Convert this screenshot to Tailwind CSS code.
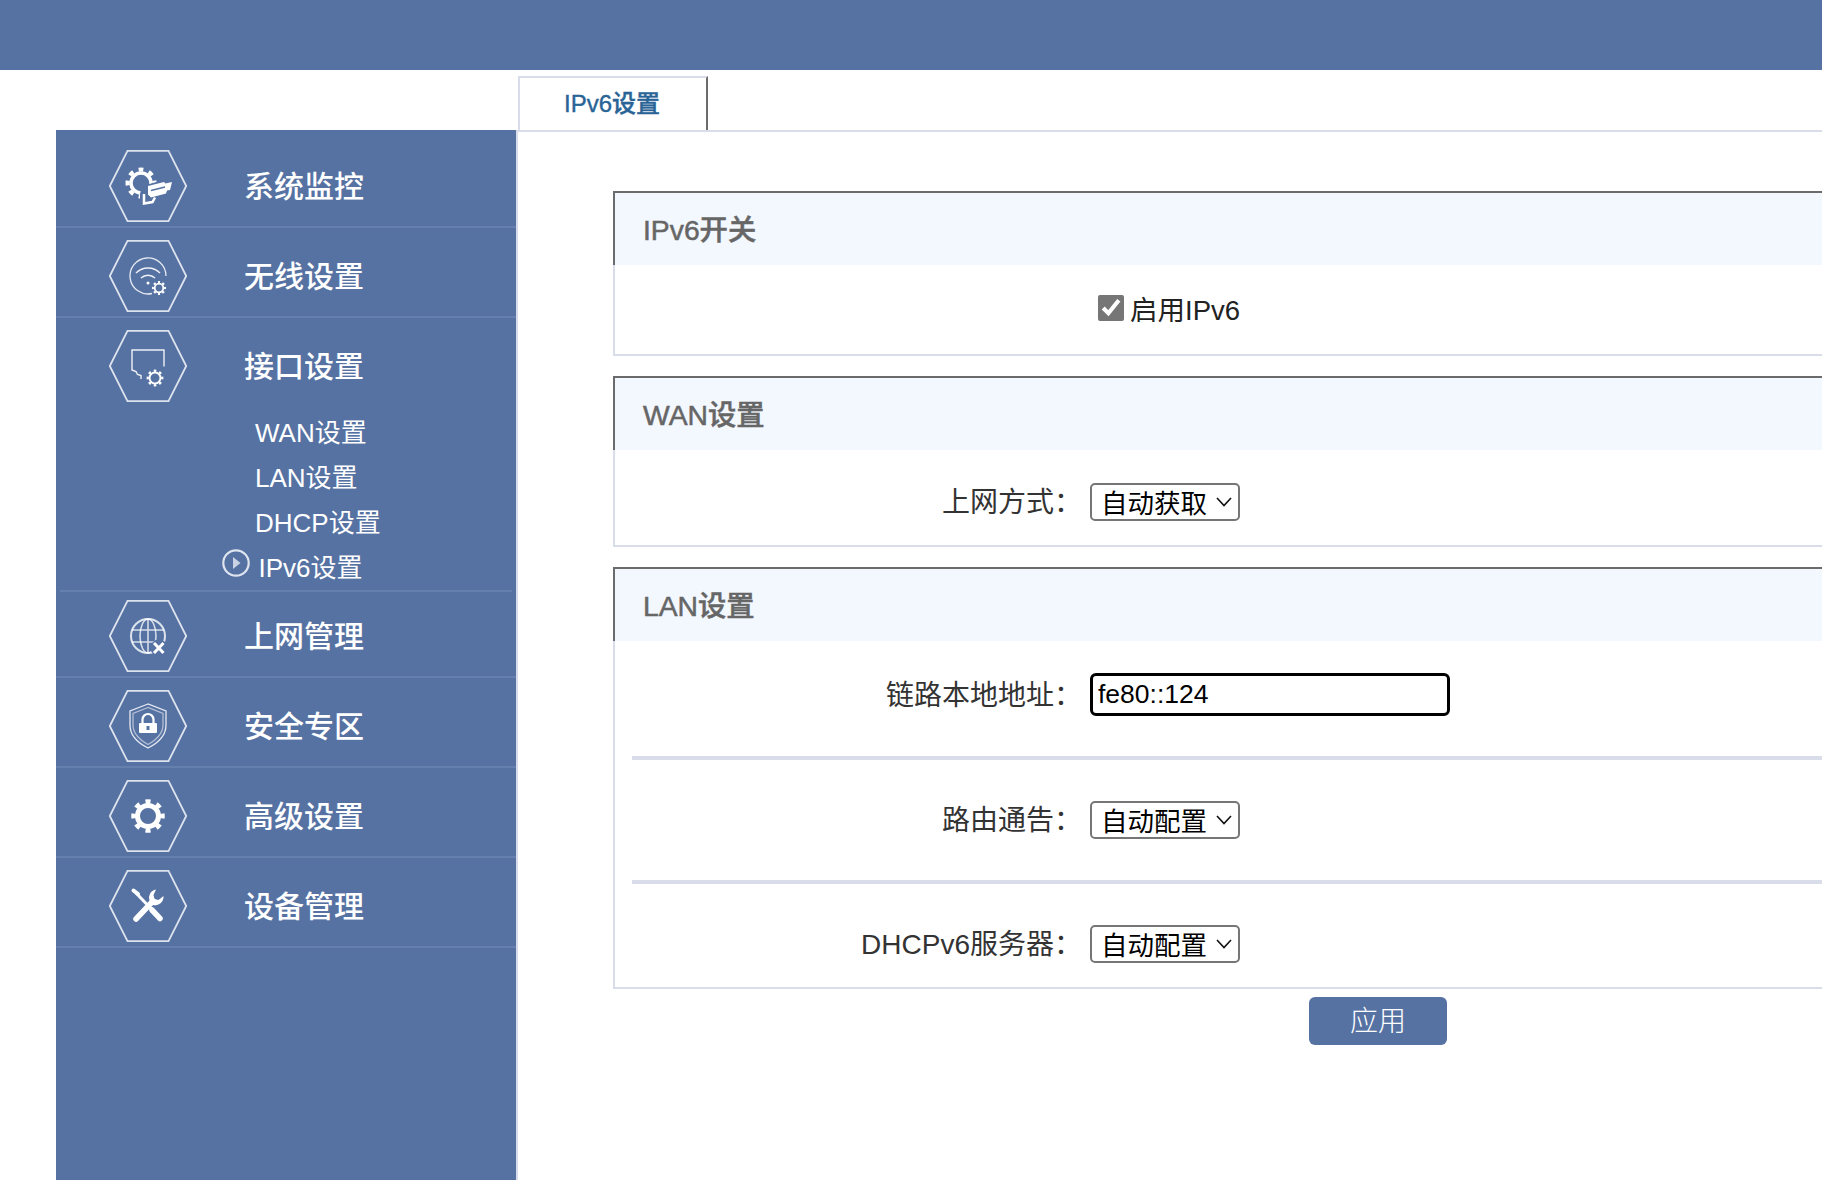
<!DOCTYPE html>
<html lang="zh-CN">
<head>
<meta charset="utf-8">
<title>IPv6设置</title>
<script src="https://cdn.jsdelivr.net/npm/@tailwindcss/browser@4"></script>
</head>
<body class="bg-white overflow-hidden font-['Liberation_Sans','Noto_Sans_CJK_SC',sans-serif]">
<div class="w-[1822px] h-[1180px] overflow-hidden flex flex-col">
  <header class="h-[70px] shrink-0 bg-[#5672a3]"></header>
  <div class="flex flex-1 min-h-0">
    <!-- sidebar -->
    <div class="ml-[56px] mt-[60px] w-[462px] shrink-0 bg-[#5672a3] border-r-2 border-[#d8dde9] text-white">
      <div class="pt-[20px] pb-[4px] border-b-2 border-[#6680ad] flex items-center h-[98px]">
        <svg class="ml-[53px] shrink-0" width="78" height="72" viewBox="0 0 78 72" fill="none" stroke="#fff">
          <path d="M.8 36 18.500 .8h41L77.200 36 59.500 71.200h-41Z" stroke-width="1.800" stroke-opacity=".8" stroke-linejoin="round"/>
          <circle cx="32" cy="33" r="10" stroke-width="3.500"/>
          <circle cx="32" cy="33" r="13.500" stroke-width="4" pathLength="8" stroke-dasharray=".45 .55" stroke-dashoffset=".225"/>
          <path d="M33 36 62 28l3 4-2 12-17 5-3 8-12 1V44Z" fill="#5672a3" stroke="none"/>
          <path d="M39 36 55 32l1.500 1.500L63 32l-2 8-3 .5-1 3-15 4-3-3Z" fill="#fff" stroke="none"/>
          <path d="M35 44v9.500l8.500-1.500 2.500-4.500" stroke-width="2.500"/>
          <path d="M42 40.500 56 37" stroke="#5672a3" stroke-width="1.400"/>
        </svg>
        <span class="ml-[57px] mt-[2px] text-[30px] leading-none font-medium">系统监控</span>
      </div>
      <div class="pt-[12px] pb-[4px] border-b-2 border-[#6680ad] flex items-center h-[90px]">
        <svg class="ml-[53px] shrink-0" width="78" height="72" viewBox="0 0 78 72" fill="none" stroke="#fff">
          <path d="M.8 36 18.500 .8h41L77.200 36 59.500 71.200h-41Z" stroke-width="1.800" stroke-opacity=".8" stroke-linejoin="round"/>
          <path d="M43 53.500A18 18 0 1 1 57 36" stroke-width="1.300" stroke-opacity=".85"/>
          <path d="M27 33a17 17 0 0 1 24 0M32 38a10 10 0 0 1 14 0" stroke-width="1.500" stroke-opacity=".9"/>
          <circle cx="39" cy="43" r="1.500" fill="#fff" stroke="none"/>
          <circle cx="50" cy="48" r="4.300" stroke-width="1.800"/>
          <circle cx="50" cy="48" r="6" stroke-width="2" pathLength="8" stroke-dasharray=".45 .55" stroke-dashoffset=".225"/>
        </svg>
        <span class="ml-[57px] mt-[2px] text-[30px] leading-none font-medium">无线设置</span>
      </div>
      <div class="pt-[12px]">
        <div class="flex items-center">
          <svg class="ml-[53px] shrink-0" width="78" height="72" viewBox="0 0 78 72" fill="none" stroke="#fff">
            <path d="M.8 36 18.500 .8h41L77.200 36 59.500 71.200h-41Z" stroke-width="1.800" stroke-opacity=".8" stroke-linejoin="round"/>
            <path d="M55 36.500V20H23v20l4 1.500 1.500 3 3.500 1v3.500" stroke-width="1.400" stroke-opacity=".9"/>
            <circle cx="46" cy="48" r="5.500" stroke-width="2"/>
            <circle cx="46" cy="48" r="7.300" stroke-width="2.200" pathLength="8" stroke-dasharray=".45 .55" stroke-dashoffset=".225"/>
          </svg>
          <span class="ml-[57px] mt-[2px] text-[30px] leading-none font-medium">接口设置</span>
        </div>
        <div class="mt-[8px] text-[26px] leading-[47px]">
          <div class="h-[45px] pl-[199px]">WAN设置</div>
          <div class="h-[45px] pl-[199px]">LAN设置</div>
          <div class="h-[45px] pl-[199px]">DHCP设置</div>
          <div class="h-[45px] flex">
            <svg class="ml-[166px] mt-[4px] shrink-0" width="28" height="28" viewBox="0 0 28 28" fill="none">
              <circle cx="14" cy="14" r="12.700" stroke="#dfe5ef" stroke-width="2.200"/>
              <path d="M11 8 18.500 14 11 20Z" fill="#c9d3e3"/>
            </svg>
            <span class="ml-[8.500px]">IPv6设置</span>
          </div>
        </div>
        <div class="mx-[4px] h-[2px] bg-[#6680ad]"></div>
      </div>
      <div class="pt-[8px] pb-[4px] border-b-2 border-[#6680ad] flex items-center h-[86px]">
        <svg class="ml-[53px] shrink-0" width="78" height="72" viewBox="0 0 78 72" fill="none" stroke="#fff">
          <path d="M.8 36 18.500 .8h41L77.200 36 59.500 71.200h-41Z" stroke-width="1.800" stroke-opacity=".8" stroke-linejoin="round"/>
          <circle cx="39" cy="36" r="17" stroke-width="2" stroke-opacity=".8"/>
          <ellipse cx="39" cy="36" rx="8" ry="17" stroke-width="1.600" stroke-opacity=".75"/>
          <path d="M39 19v34M23 30h32M23 42h32" stroke-width="1.600" stroke-opacity=".75"/>
          <circle cx="50" cy="48" r="8.500" fill="#5672a3" stroke="none"/>
          <path d="M45 43 54.500 53M54.500 43 45 53" stroke-width="3"/>
        </svg>
        <span class="ml-[57px] mt-[2px] text-[30px] leading-none font-medium">上网管理</span>
      </div>
      <div class="pt-[12px] pb-[4px] border-b-2 border-[#6680ad] flex items-center h-[90px]">
        <svg class="ml-[53px] shrink-0" width="78" height="72" viewBox="0 0 78 72" fill="none" stroke="#fff">
          <path d="M.8 36 18.500 .8h41L77.200 36 59.500 71.200h-41Z" stroke-width="1.800" stroke-opacity=".8" stroke-linejoin="round"/>
          <path d="M39 14 21 21v14c0 11 8 18 18 23 10-5 18-12 18-23V21Z" stroke-width="1.300" stroke-opacity=".85"/>
          <path d="M39 17.500 24 23.500V35c0 9 7 15 15 19.500 8-4.500 15-10.500 15-19.500V23.500Z" stroke-width="1.300" stroke-opacity=".55"/>
          <path d="M33.500 33v-3.500a5.500 5.500 0 0 1 11 0V33" stroke-width="2.200"/>
          <path fill-rule="evenodd" clip-rule="evenodd" d="M31 33h16a1 1 0 0 1 1 1v8a1 1 0 0 1-1 1H31a1 1 0 0 1-1-1v-8a1 1 0 0 1 1-1Zm6.500 3v4h3v-4Z" fill="#fff" stroke="none"/>
        </svg>
        <span class="ml-[57px] mt-[2px] text-[30px] leading-none font-medium">安全专区</span>
      </div>
      <div class="pt-[12px] pb-[4px] border-b-2 border-[#6680ad] flex items-center h-[90px]">
        <svg class="ml-[53px] shrink-0" width="78" height="72" viewBox="0 0 78 72" fill="none" stroke="#fff">
          <path d="M.8 36 18.500 .8h41L77.200 36 59.500 71.200h-41Z" stroke-width="1.800" stroke-opacity=".8" stroke-linejoin="round"/>
          <circle cx="39" cy="36" r="10.500" stroke-width="5"/>
          <circle cx="39" cy="36" r="14.500" stroke-width="4.500" pathLength="8" stroke-dasharray=".45 .55" stroke-dashoffset=".225"/>
        </svg>
        <span class="ml-[57px] mt-[2px] text-[30px] leading-none font-medium">高级设置</span>
      </div>
      <div class="pt-[12px] pb-[4px] border-b-2 border-[#6680ad] flex items-center h-[90px]">
        <svg class="ml-[53px] shrink-0" width="78" height="72" viewBox="0 0 78 72" fill="none" stroke="#fff">
          <path d="M.8 36 18.500 .8h41L77.200 36 59.500 71.200h-41Z" stroke-width="1.800" stroke-opacity=".8" stroke-linejoin="round"/>
          <path d="M27 23 50 47" stroke-width="3"/>
          <path d="M43 40 51 48.500" stroke-width="5.500" stroke-linecap="round"/>
          <path d="M24.500 20.500 29 24" stroke-width="4" stroke-linecap="round"/>
          <path d="M27 49 44 31" stroke-width="5.500" stroke-linecap="round"/>
          <path d="M47 19.500a8.500 8.500 0 0 0-6.500 11.500l3.500 4a8.500 8.500 0 0 0 10.500-9l-5 4-4-1-1-4Z" fill="#fff" stroke="none"/>
        </svg>
        <span class="ml-[57px] mt-[2px] text-[30px] leading-none font-medium">设备管理</span>
      </div>
    </div>

    <!-- content -->
    <div class="flex-1 min-w-0 overflow-hidden">
      <div class="mt-[6px] w-[190px] h-[54px] bg-white border-t-2 border-l-2 border-r-2 border-t-[#d8dde9] border-l-[#d8dde9] border-r-[#6b6b6b] flex items-center justify-center pr-[2px] text-[24px] font-medium text-[#2a6496] [-webkit-text-stroke:0.4px_#2a6496]">IPv6设置</div>
      <div class="h-[2px] bg-[#d8dde9]"></div>

      <div class="ml-[95px] mt-[59px] w-[1400px]">
        <!-- IPv6 switch -->
        <section class="h-[165px] border-l-2 border-b-2 border-[#d8dde9] flex flex-col">
          <h2 class="-ml-[2px] h-[74px] shrink-0 bg-[#f3f7fe] border-t-2 border-l-2 border-[#6b6b6b] pl-[28px] pt-[2px] flex items-center text-[28.3px] font-medium text-[#666] [-webkit-text-stroke:0.5px_#666]">IPv6开关</h2>
          <label class="pl-[483px] pt-[30px] flex items-start text-[27.5px] text-[#222]">
            <input type="checkbox" checked class="w-[26px] h-[26px] m-0 accent-[#767676]">
            <span class="ml-[6px] leading-[32px]">启用IPv6</span>
          </label>
        </section>

        <!-- WAN -->
        <section class="mt-[20px] h-[171px] border-l-2 border-b-2 border-[#d8dde9]">
          <h2 class="-ml-[2px] h-[74px] bg-[#f3f7fe] border-t-2 border-l-2 border-[#6b6b6b] pl-[28px] pt-[2px] flex items-center text-[28.3px] font-medium text-[#666] [-webkit-text-stroke:0.5px_#666]">WAN设置</h2>
          <div class="pt-[33px] flex items-start">
            <span class="w-[467px] text-right text-[28px] leading-[40px] text-[#333]">上网方式：</span>
            <div class="relative ml-[8px] w-[150px] h-[38px]">
              <select class="appearance-none w-full h-full border-2 border-[#767676] rounded-[5px] pl-[9px] pb-[2px] bg-white text-[26.5px] text-black outline-none"><option>自动获取</option></select>
              <svg class="absolute right-[8px] top-[14px] pointer-events-none" width="16" height="10" viewBox="0 0 16 10" fill="none" stroke="#111" stroke-width="1.600"><path d="M1 1 8 8.500 15 1"/></svg>
            </div>
          </div>
        </section>

        <!-- LAN -->
        <section class="mt-[20px] h-[422px] border-l-2 border-b-2 border-[#d8dde9]">
          <h2 class="-ml-[2px] h-[74px] bg-[#f3f7fe] border-t-2 border-l-2 border-[#6b6b6b] pl-[28px] pt-[2px] flex items-center text-[28.3px] font-medium text-[#666] [-webkit-text-stroke:0.5px_#666]">LAN设置</h2>
          <div class="h-[115px] pt-[32px] flex items-start">
            <span class="w-[467px] text-right text-[28px] leading-[45px] text-[#333]">链路本地地址：</span>
            <input value="fe80::124" class="ml-[8px] w-[360px] h-[43px] border-[3.5px] border-black rounded-[6px] pl-[5px] text-[26.5px] text-black bg-white outline-none">
          </div>
          <div class="ml-[17px] h-[4px] bg-[#d8dde9]"></div>
          <div class="h-[120px] pt-[41px] flex items-start">
            <span class="w-[467px] text-right text-[28px] leading-[40px] text-[#333]">路由通告：</span>
            <div class="relative ml-[8px] w-[150px] h-[38px]">
              <select class="appearance-none w-full h-full border-2 border-[#767676] rounded-[5px] pl-[9px] pb-[2px] bg-white text-[26.5px] text-black outline-none"><option>自动配置</option></select>
              <svg class="absolute right-[8px] top-[14px] pointer-events-none" width="16" height="10" viewBox="0 0 16 10" fill="none" stroke="#111" stroke-width="1.600"><path d="M1 1 8 8.500 15 1"/></svg>
            </div>
          </div>
          <div class="ml-[17px] h-[4px] bg-[#d8dde9]"></div>
          <div class="pt-[41px] flex items-start">
            <span class="w-[467px] text-right text-[28px] leading-[40px] text-[#333]">DHCPv6服务器：</span>
            <div class="relative ml-[8px] w-[150px] h-[38px]">
              <select class="appearance-none w-full h-full border-2 border-[#767676] rounded-[5px] pl-[9px] pb-[2px] bg-white text-[26.5px] text-black outline-none"><option>自动配置</option></select>
              <svg class="absolute right-[8px] top-[14px] pointer-events-none" width="16" height="10" viewBox="0 0 16 10" fill="none" stroke="#111" stroke-width="1.600"><path d="M1 1 8 8.500 15 1"/></svg>
            </div>
          </div>
        </section>

        <button class="mt-[8px] ml-[696px] w-[138px] h-[48px] pt-[2px] rounded-[6px] bg-[#5672a3] text-white text-[28px] font-light">应用</button>
      </div>
    </div>
  </div>
</div>
</body>
</html>
